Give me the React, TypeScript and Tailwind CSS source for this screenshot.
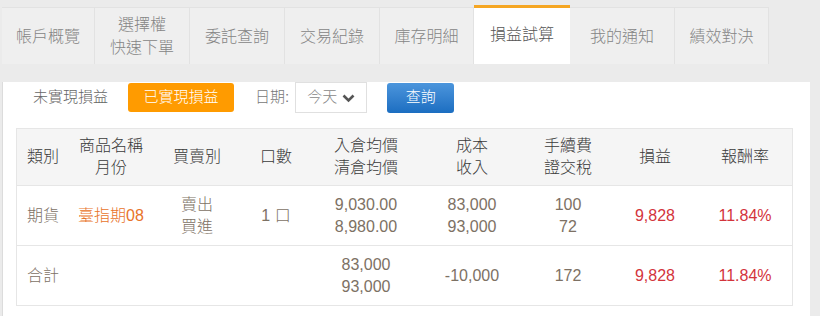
import React from "react";

const font = { fontFamily: '"Liberation Sans", "Noto Sans CJK TC", sans-serif' };

const tabs: { label: React.ReactNode; w: string; active?: boolean }[] = [
  { label: "帳戶概覽", w: "w-[93px]" },
  { label: (<><div>選擇權</div><div>快速下單</div></>), w: "w-[95px]" },
  { label: "委託查詢", w: "w-[95px]" },
  { label: "交易紀錄", w: "w-[95px]" },
  { label: "庫存明細", w: "w-[94px]" },
  { label: "損益試算", w: "w-[96px]", active: true },
  { label: "我的通知", w: "w-[105px]" },
  { label: "績效對決", w: "w-[94px]" },
];

const cols = "grid grid-cols-[53px_82px_90px_68px_112px_100px_92px_82px_98px]";

function Cell({ children, className = "" }: { children?: React.ReactNode; className?: string }) {
  return <div className={`flex flex-col items-center justify-center text-center leading-[22px] ${className}`}>{children}</div>;
}

export default function App() {
  return (
    <div style={font} className="w-[820px] h-[316px] bg-[#ebebeb] pl-[2px] overflow-hidden font-light">
      <div className="flex items-end h-[64px]">
        {tabs.map((t, i) => (
          <div
            key={i}
            className={
              t.active
                ? `${t.w} h-[59px] bg-white border-t-[3px] border-[#f5a623] flex flex-col items-center justify-center text-[16px] leading-[22px] text-[#555] pb-[2px]`
                : `${t.w} h-[57px] bg-[#efefef] border-t border-r border-[#e2e2e2] flex flex-col items-center justify-center text-[16px] leading-[23px] text-[#858585]`
            }
          >
            {t.label}
          </div>
        ))}
      </div>
      <div className="w-[808px] h-[252px] bg-white border-l border-[#dcdcdc] pl-[13px]">
        <div className="flex items-center h-[31px] mt-[18px] pl-[17px] text-[15px]">
          <span className="text-[#666]">未實現損益</span>
          <span className="ml-[20px] w-[106px] h-[29px] rounded-[3px] bg-[#ff9b00] text-white flex items-center justify-center">已實現損益</span>
          <span className="ml-[21px] text-[#777]">日期:</span>
          <div className="ml-[6px] w-[72px] h-[31px] border border-[#e0e0e0] bg-white flex items-center justify-center gap-[5px] text-[#888]">
            <span>今天</span>
            <svg width="13" height="10" viewBox="0 0 13 10">
              <path d="M1.5 2.5 L6.5 7.5 L11.5 2.5" fill="none" stroke="#555" strokeWidth="2.6" />
            </svg>
          </div>
          <span className="ml-[20px] w-[67px] h-[30px] rounded-[3px] bg-gradient-to-b from-[#4b95dc] to-[#1b6ec1] text-white flex items-center justify-center">查詢</span>
        </div>
        <div className="mt-[15px] w-[777px] border border-[#e6e6e6] text-[16px]">
          <div className={`${cols} h-[57px] bg-[#f5f5f5] text-[#3a3a3a] border-b border-[#e6e6e6]`}>
            <Cell className="items-start pl-[10px]">類別</Cell>
            <Cell><div>商品名稱</div><div>月份</div></Cell>
            <Cell>買賣別</Cell>
            <Cell>口數</Cell>
            <Cell><div>入倉均價</div><div>清倉均價</div></Cell>
            <Cell><div>成本</div><div>收入</div></Cell>
            <Cell><div>手續費</div><div>證交稅</div></Cell>
            <Cell>損益</Cell>
            <Cell>報酬率</Cell>
          </div>
          <div className={`${cols} h-[60px] text-[#7d7164] border-b border-[#e6e6e6]`}>
            <Cell className="items-start pl-[10px]">期貨</Cell>
            <Cell className="text-[#e8732a]">臺指期08</Cell>
            <Cell><div>賣出</div><div>買進</div></Cell>
            <Cell>1 口</Cell>
            <Cell><div>9,030.00</div><div>8,980.00</div></Cell>
            <Cell><div>83,000</div><div>93,000</div></Cell>
            <Cell><div>100</div><div>72</div></Cell>
            <Cell className="text-[#d3343c]">9,828</Cell>
            <Cell className="text-[#d3343c]">11.84%</Cell>
          </div>
          <div className={`${cols} h-[59px] text-[#7d7164]`}>
            <Cell className="items-start pl-[10px]">合計</Cell>
            <Cell></Cell>
            <Cell></Cell>
            <Cell></Cell>
            <Cell><div>83,000</div><div>93,000</div></Cell>
            <Cell>-10,000</Cell>
            <Cell>172</Cell>
            <Cell className="text-[#d3343c]">9,828</Cell>
            <Cell className="text-[#d3343c]">11.84%</Cell>
          </div>
        </div>
      </div>
    </div>
  );
}
